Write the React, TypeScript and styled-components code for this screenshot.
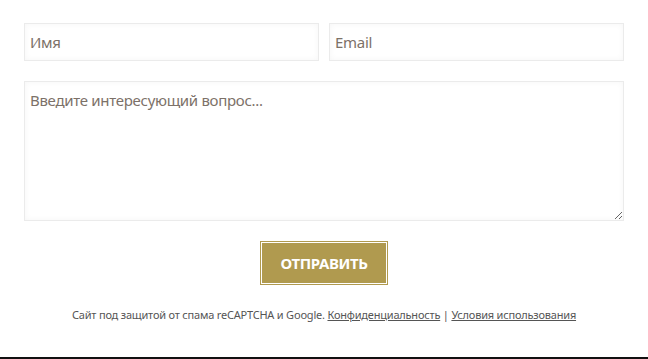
import React from 'react';
import styled, { createGlobalStyle } from 'styled-components';

const GlobalStyle = createGlobalStyle`
  html, body {
    margin: 0;
    padding: 0;
    background: #ffffff;
  }
  body {
    font-family: 'Noto Sans', 'Open Sans', sans-serif;
  }
  * {
    box-sizing: border-box;
  }
`;

const App = () => {
  return (
    <>
      <GlobalStyle />
      <Page>
        <Form onSubmit={e => e.preventDefault()}>
          <Row>
            <Field type="text" placeholder="Имя" />
            <Field type="email" placeholder="Email" />
          </Row>
          <Message placeholder="Введите интересующий вопрос..." />
          <Actions>
            <SubmitButton type="submit">Отправить</SubmitButton>
          </Actions>
          <Notice>
            Сайт под защитой от спама reCAPTCHA и Google. <Link href="#">Конфиденциальность</Link> |{' '}
            <Link href="#">Условия использования</Link>
          </Notice>
        </Form>
      </Page>
    </>
  );
};

const Page = styled.div`
  height: 359px;
  padding: 23px 24px 0 24px;
  border-bottom: 2px solid #111111;
`;

const Form = styled.form`
  display: flex;
  flex-direction: column;
  width: 600px;
`;

const Row = styled.div`
  display: grid;
  grid-template-columns: 295px 295px;
  justify-content: space-between;
  margin-bottom: 20px;
`;

const inputBase = `
  border: 1px solid #ebebeb;
  box-shadow: inset 0 0 6px rgba(0, 0, 0, 0.04);
  background: #ffffff;
  font-family: 'Noto Sans', 'Open Sans', sans-serif;
  font-size: 15px;
  letter-spacing: -0.3px;
  color: #333;
  padding: 0 5px;
  outline: none;

  &::placeholder {
    color: #7c7168;
  }
`;

const Field = styled.input`
  ${inputBase}
  height: 38px;
`;

const Message = styled.textarea`
  ${inputBase}
  height: 140px;
  padding: 7px 5px;
  resize: vertical;
  line-height: 22px;
`;

const Actions = styled.div`
  display: flex;
  justify-content: center;
  margin-top: 20px;
`;

const SubmitButton = styled.button`
  width: 128px;
  height: 44px;
  background: #b09a4f;
  border: 1px solid #b09a4f;
  box-shadow: inset 0 0 0 1px #ffffff;
  color: #ffffff;
  font-family: 'Noto Sans', 'Open Sans', sans-serif;
  font-weight: 700;
  font-size: 15px;
  text-transform: uppercase;
  cursor: pointer;
  padding: 0;
  letter-spacing: -0.4px;
`;

const Notice = styled.p`
  margin: 22px 0 0 0;
  text-align: center;
  font-size: 11px;
  color: #555555;
  font-family: 'Noto Sans', 'Open Sans', sans-serif;
  letter-spacing: -0.2px;
`;

const Link = styled.a`
  color: #555555;
  text-decoration: underline;
`;

export default App;
